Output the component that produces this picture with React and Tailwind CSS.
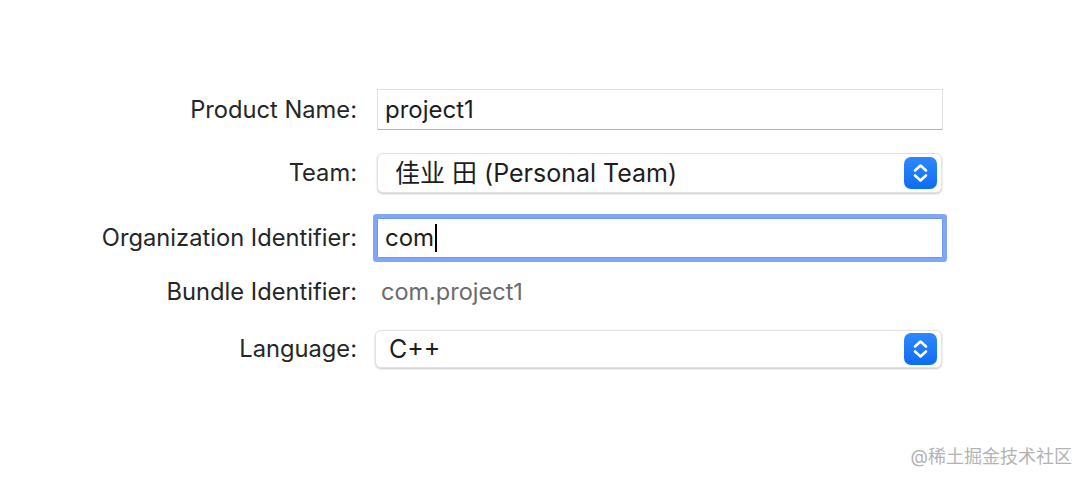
const font = { fontFamily: 'Inter, "Noto Sans CJK SC", sans-serif' };

function Label({ children }) {
  return (
    <div className="w-[357px] shrink-0 text-right text-[23.7px] leading-none text-[#262626]">
      {children}
    </div>
  );
}

function Stepper() {
  return (
    <svg
      width="33"
      height="32"
      viewBox="0 0 33 32"
      className="shrink-0 rounded-[7px] bg-gradient-to-b from-[#2d88fb] to-[#0d6cf2]"
      aria-hidden
    >
      <polyline points="11,13.5 16.5,8.5 22,13.5" fill="none" stroke="white" strokeWidth="2.6" strokeLinecap="round" strokeLinejoin="round" />
      <polyline points="11,18.5 16.5,23.5 22,18.5" fill="none" stroke="white" strokeWidth="2.6" strokeLinecap="round" strokeLinejoin="round" />
    </svg>
  );
}

function Popup({ children, pad }) {
  return (
    <div
      className={`flex h-full w-full items-center justify-between rounded-[6px] border border-[#e2e2e2] bg-white pr-[4px] shadow-[0_1px_2px_rgba(0,0,0,0.22)] ${pad}`}
    >
      <span className="text-[25px] leading-none text-[#1d1d1d]">{children}</span>
      <Stepper />
    </div>
  );
}

export default function App() {
  return (
    <div className="relative h-[484px] w-[1088px] overflow-hidden bg-white" style={font}>
      <div className="flex flex-col pt-[89px]">
        <div className="flex h-[41px] items-center">
          <Label>Product Name:</Label>
          <div className="ml-[20px] flex h-full w-[566px] items-center border border-[#e0e0e0] border-b-[#b4b4b4] bg-white pl-[7px] text-[24px] text-[#1d1d1d]">
            project1
          </div>
        </div>

        <div className="mt-[23px] flex h-[40px] items-center">
          <Label>Team:</Label>
          <div className="ml-[20px] h-full w-[565px]">
            <Popup pad="pl-[17px]">佳业 田 (Personal Team)</Popup>
          </div>
        </div>

        <div className="mt-[25px] flex h-[40px] items-center">
          <Label>Organization Identifier:</Label>
          <div className="ml-[20px] flex h-full w-[566px] items-center rounded-[1px] border border-[#6d97ee] bg-white pl-[7px] text-[24px] text-[#1d1d1d] shadow-[0_0_0_4px_#80a6f5]">
            com
            <span className="ml-[1px] h-[28px] w-[2px] bg-black" />
          </div>
        </div>

        <div className="mt-[19px] flex h-[30px] items-center">
          <Label>Bundle Identifier:</Label>
          <div className="ml-[24px] text-[23.5px] leading-none text-[#6b6b6b]">com.project1</div>
        </div>

        <div className="mt-[23px] flex h-[38px] items-center">
          <Label>Language:</Label>
          <div className="ml-[18px] h-full w-[567px]">
            <Popup pad="pl-[13px]">C++</Popup>
          </div>
        </div>
      </div>

      <div className="absolute right-[16px] top-[448px] text-[18px] leading-none text-[#b3b3b3]">
        @稀土掘金技术社区
      </div>
    </div>
  );
}
